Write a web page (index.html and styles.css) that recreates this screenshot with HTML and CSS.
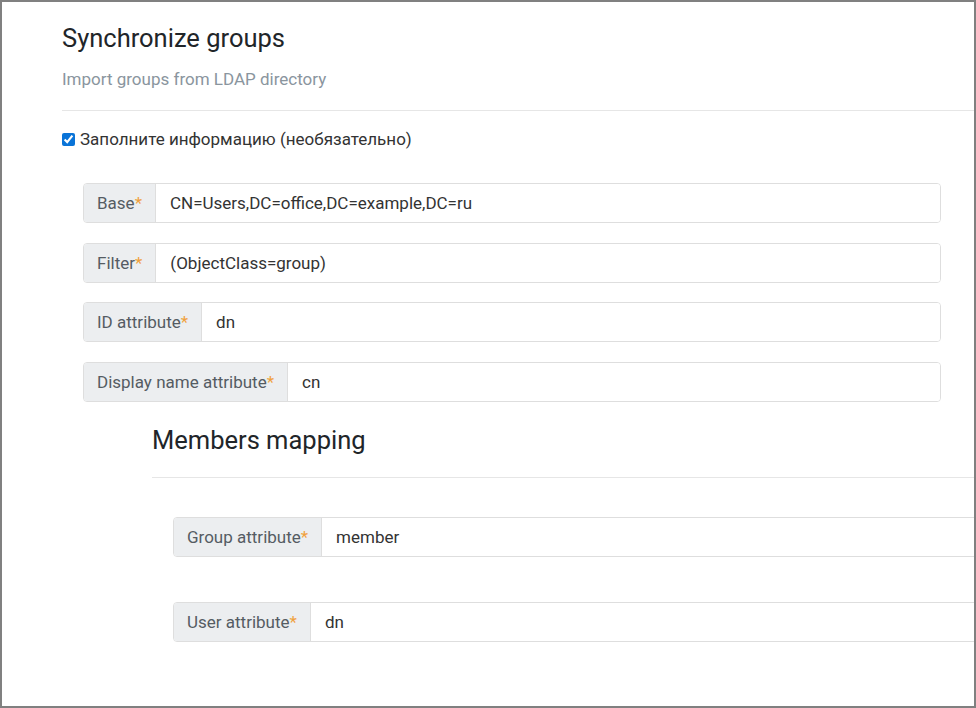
FILE: index.html
```html
<!DOCTYPE html>
<html lang="ru">
<head>
<meta charset="utf-8">
<title>Synchronize groups</title>
<link rel="stylesheet" href="styles.css">
</head>
<body>
<div class="frame">
  <div class="page">
    <h1 class="title">Synchronize groups</h1>
    <p class="subtitle">Import groups from LDAP directory</p>
    <hr class="rule">
    <label class="check-row">
      <input type="checkbox" class="check" checked>
      <span>Заполните информацию (необязательно)</span>
    </label>
    <div class="fields">
      <div class="input-group">
        <span class="addon">Base<span class="req">*</span></span>
        <span class="value">CN=Users,DC=office,DC=example,DC=ru</span>
      </div>
      <div class="input-group">
        <span class="addon">Filter<span class="req">*</span></span>
        <span class="value">(ObjectClass=group)</span>
      </div>
      <div class="input-group">
        <span class="addon">ID attribute<span class="req">*</span></span>
        <span class="value">dn</span>
      </div>
      <div class="input-group">
        <span class="addon">Display name attribute<span class="req">*</span></span>
        <span class="value">cn</span>
      </div>
    </div>
    <section class="members">
      <h2 class="title sub-title">Members mapping</h2>
      <hr class="rule members-rule">
      <div class="member-fields">
        <div class="input-group wide">
          <span class="addon">Group attribute<span class="req">*</span></span>
          <span class="value">member</span>
        </div>
        <div class="input-group wide">
          <span class="addon">User attribute<span class="req">*</span></span>
          <span class="value">dn</span>
        </div>
      </div>
    </section>
  </div>
</div>
</body>
</html>
```
FILE: styles.css
```css
* { box-sizing: border-box; }
html, body { margin: 0; padding: 0; background: #ffffff; }
body {
  font-family: Roboto, "Liberation Sans", sans-serif;
  color: #333333;
}
.frame {
  width: 976px;
  height: 708px;
  border: 2px solid #808080;
  overflow: hidden;
  background: #ffffff;
}
.page {
  padding: 20px 0 0 60px;
  width: 1100px;
}
.title {
  margin: 0;
  font-size: 25.5px;
  line-height: 32px;
  font-weight: 400;
  color: #212529;
}
.subtitle {
  margin: 13px 0 0;
  font-size: 17px;
  line-height: 24px;
  color: #8a959e;
}
.rule {
  margin: 19px 0 0;
  border: 0;
  border-top: 1px solid #e6e6e6;
  height: 0;
}
.check-row {
  display: flex;
  align-items: center;
  margin-top: 16px;
  font-size: 17px;
  line-height: 24px;
  color: #333333;
}
.check {
  margin: 0 5px 0 0;
  width: 13px;
  height: 13px;
  accent-color: #0a74d8;
}
.fields {
  display: flex;
  flex-direction: column;
  gap: 19.67px;
  margin: 32px 0 0 21px;
  width: 858px;
}
.input-group {
  display: flex;
  height: 40px;
  border: 1px solid #dedede;
  border-radius: 4px;
  font-size: 17px;
  line-height: 24px;
  overflow: hidden;
}
.addon {
  display: flex;
  align-items: center;
  padding: 0 13px;
  background: #eceef0;
  color: #555c63;
  border-right: 1px solid #dedede;
  white-space: nowrap;
}
.req { color: #f0a13c; }
.value {
  display: flex;
  align-items: center;
  padding: 0 14px;
  color: #333333;
  flex: 1;
  background: #ffffff;
}
.members {
  margin: 22px 0 0 90px;
}
.members-rule { margin-top: 21px; }
.member-fields {
  display: flex;
  flex-direction: column;
  gap: 45px;
  margin: 39px 0 0 21px;
}
.input-group.wide { width: 900px; }
```
